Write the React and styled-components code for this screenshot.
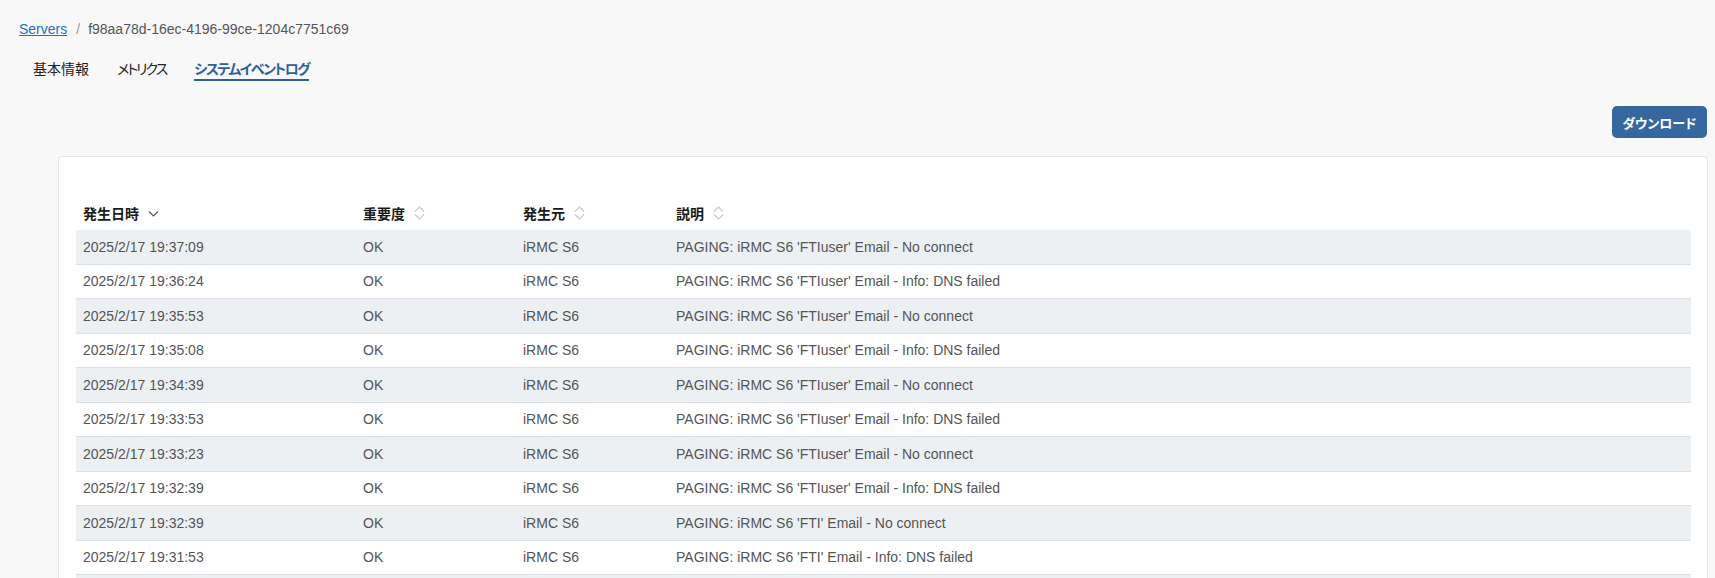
import React from 'react';
import styled, { createGlobalStyle } from 'styled-components';

const GlobalStyle = createGlobalStyle`
  html, body {
    margin: 0;
    padding: 0;
    background: #f8f8f8;
    font-family: "Liberation Sans", "Noto Sans CJK JP", Arial, sans-serif;
    overflow: hidden;
  }
`;

const Page = styled.div`
  width: 1715px;
  height: 578px;
  overflow: hidden;
`;

const Breadcrumb = styled.div`
  display: flex;
  align-items: center;
  padding: 20px 0 0 19px;
  height: 18px;
  line-height: 18px;
  font-size: 14px;
  color: #555;
`;

const Crumb = styled.a`
  color: #1f6fc5;
  text-decoration: underline;
  cursor: pointer;
`;

const Sep = styled.span`
  color: #999;
  margin: 0 8px 0 9px;
`;

const Tabs = styled.div`
  display: flex;
  margin-top: 20px;
  padding-left: 19px;
`;

const Tab = styled.div`
  padding: 0 14px;
  font-family: "Noto Sans CJK JP", "Liberation Sans", sans-serif;
  font-feature-settings: "palt";
  font-size: 14px;
  line-height: 20px;
  letter-spacing: ${(p) => p.$ls || '0'};
  cursor: pointer;
  color: ${(p) => (p.$active ? '#2c5f9b' : '#222')};
  font-weight: ${(p) => (p.$active ? 700 : 400)};
`;

const TabLabel = styled.span`
  display: inline-block;
  padding-bottom: 1px;
  border-bottom: 2px solid ${(p) => (p.$active ? '#2c5f9b' : 'transparent')};
`;

const Toolbar = styled.div`
  display: flex;
  justify-content: flex-end;
  margin-top: 25px;
  padding-right: 8px;
`;

const Button = styled.button`
  width: 95px;
  height: 32px;
  border: none;
  border-radius: 5px;
  background: #36679f;
  color: #fff;
  font-family: "Noto Sans CJK JP", sans-serif;
  font-feature-settings: "palt";
  font-weight: 700;
  font-size: 13px;
  cursor: pointer;
`;

const Card = styled.div`
  margin: 18px 7px 0 58px;
  background: #fff;
  border: 1px solid #e6e6e6;
  border-radius: 4px;
  padding: 38px 16px 0 17px;
`;

const Table = styled.table`
  width: 100%;
  border-collapse: collapse;
  table-layout: fixed;
`;

const Th = styled.th`
  box-sizing: border-box;
  width: ${(p) => p.$w || 'auto'};
  height: 35px;
  padding: 0 7px;
  text-align: left;
  font-family: "Noto Sans CJK JP", sans-serif;
  font-size: 14px;
  font-weight: 700;
  color: #1a1a1a;
  vertical-align: middle;
`;

const HeadInner = styled.span`
  display: inline-flex;
  align-items: center;
  gap: 9px;
`;

const Row = styled.tr`
  background: ${(p) => (p.$odd ? '#edf0f3' : '#fff')};
  border-bottom: 1px solid #dde1e5;
`;

const Td = styled.td`
  height: 33.5px;
  padding: 0 7px;
  font-size: 14px;
  color: #555;
  white-space: nowrap;
  vertical-align: middle;
`;

const SortIcon = ({ dir }) =>
  dir === 'desc' ? (
    <svg width="11" height="14" viewBox="0 0 11 14">
      <path d="M1 5.5 L5.5 10 L10 5.5" fill="none" stroke="#555" strokeWidth="1.1" />
    </svg>
  ) : (
    <svg width="11" height="14" viewBox="0 0 11 14">
      <path d="M1 5.5 L5.5 1 L10 5.5" fill="none" stroke="#c8c8c8" strokeWidth="1.1" />
      <path d="M1 8.5 L5.5 13 L10 8.5" fill="none" stroke="#c8c8c8" strokeWidth="1.1" />
    </svg>
  );

const times = [
  ['19:37:09', "'FTIuser' Email - No connect"],
  ['19:36:24', "'FTIuser' Email - Info: DNS failed"],
  ['19:35:53', "'FTIuser' Email - No connect"],
  ['19:35:08', "'FTIuser' Email - Info: DNS failed"],
  ['19:34:39', "'FTIuser' Email - No connect"],
  ['19:33:53', "'FTIuser' Email - Info: DNS failed"],
  ['19:33:23', "'FTIuser' Email - No connect"],
  ['19:32:39', "'FTIuser' Email - Info: DNS failed"],
  ['19:32:39', "'FTI' Email - No connect"],
  ['19:31:53', "'FTI' Email - Info: DNS failed"],
  ['19:31:08', "'FTI' Email - No connect"],
];

export default function App() {
  return (
    <Page>
      <GlobalStyle />
      <Breadcrumb>
        <Crumb>Servers</Crumb>
        <Sep>/</Sep>
        <span>f98aa78d-16ec-4196-99ce-1204c7751c69</span>
      </Breadcrumb>
      <Tabs>
        <Tab><TabLabel>基本情報</TabLabel></Tab>
        <Tab $ls="-2px"><TabLabel>メトリクス</TabLabel></Tab>
        <Tab $active $ls="-1.5px"><TabLabel $active>システムイベントログ</TabLabel></Tab>
      </Tabs>
      <Toolbar>
        <Button>ダウンロード</Button>
      </Toolbar>
      <Card>
        <Table>
          <thead>
            <tr>
              <Th $w="280px"><HeadInner>発生日時<SortIcon dir="desc" /></HeadInner></Th>
              <Th $w="160px"><HeadInner>重要度<SortIcon /></HeadInner></Th>
              <Th $w="153px"><HeadInner>発生元<SortIcon /></HeadInner></Th>
              <Th><HeadInner>説明<SortIcon /></HeadInner></Th>
            </tr>
          </thead>
          <tbody>
            {times.map(([t, msg], i) => (
              <Row key={i} $odd={i % 2 === 0}>
                <Td>2025/2/17 {t}</Td>
                <Td>OK</Td>
                <Td>iRMC S6</Td>
                <Td>PAGING: iRMC S6 {msg}</Td>
              </Row>
            ))}
          </tbody>
        </Table>
      </Card>
    </Page>
  );
}
